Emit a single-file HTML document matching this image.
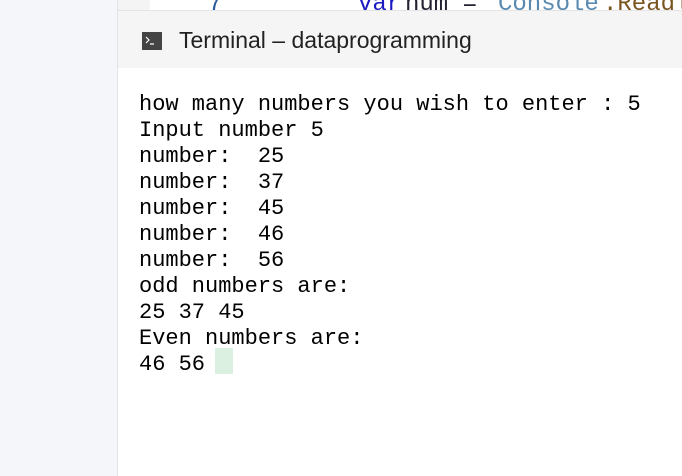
<!DOCTYPE html>
<html><head><meta charset="utf-8"><style>
html,body{margin:0;padding:0;width:682px;height:476px;overflow:hidden;background:#fff;position:relative;font-family:"Liberation Sans",sans-serif}
.side{position:absolute;left:0;top:0;width:117px;height:476px;background:#f4f6f9;border-right:1px solid #e2e4e8}
.gut{position:absolute;left:118px;top:0;width:32px;height:10px;background:#f4f4f4}
.code{position:absolute;left:118px;top:0;width:564px;height:10px;overflow:hidden;font-family:"Liberation Mono",monospace;font-size:24px;white-space:pre}
.code span{position:absolute;top:-9px}
.hdr{position:absolute;left:118px;top:10px;width:564px;height:57px;background:#f5f5f5;border-top:1px solid #e4e4e4}
.icon{position:absolute;left:142px;top:32px;width:20px;height:18px;background:#444}
.title{position:absolute;left:179px;top:27px;font-size:23px;color:#222}
pre{position:absolute;left:139px;top:92px;margin:0;font-family:"Liberation Mono",monospace;font-size:22px;line-height:26px;color:#000}
.cur{position:absolute;left:215px;top:348px;width:18px;height:26px;background:#dcf0e2}
</style></head><body>
<div class="side"></div>
<div class="gut"></div>
<div class="code"><span style="left:90px;color:#2a5a9a">7</span><span style="left:240px;color:#1a1ac0">var</span><span style="left:287px;color:#223">num = </span><span style="left:380px;color:#5a8ab0">Console</span><span style="left:485px;color:#7a5520">.Readl</span></div>
<div class="hdr"></div>
<div class="icon"><svg width="20" height="18" viewBox="0 0 20 18"><path d="M4 5l3 3-3 3M8 12h4" stroke="#fff" stroke-width="1.2" fill="none"/></svg></div>
<div class="title">Terminal – dataprogramming</div>
<pre>how many numbers you wish to enter : 5
Input number 5
number:  25
number:  37
number:  45
number:  46
number:  56
odd numbers are:
25 37 45
Even numbers are:
46 56</pre>
<div class="cur"></div>
</body></html>
